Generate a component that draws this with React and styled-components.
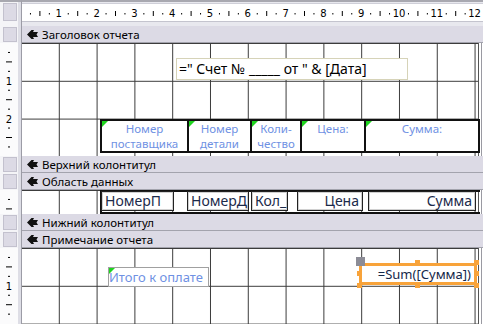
import React from "react";
import styled, { createGlobalStyle } from "styled-components";

const CM = 37.8;

const GlobalStyle = createGlobalStyle`
  html, body {
    margin: 0;
    padding: 0;
    background: #ffffff;
    overflow: hidden;
  }
  body {
    font-family: "Noto Sans", "Open Sans", sans-serif;
  }
`;

const Designer = styled.div`
  display: grid;
  grid-template-columns: 22px 461px;
  grid-template-rows: 26px 17px 113px 17px 17px 24px 17px 17px 76px;
  width: 483px;
  height: 324px;
  overflow: hidden;
`;

const SideCell = styled.div`
  background: #f4f4f7;
  border-right: 1px solid #9c9ca6;
  box-shadow: inset -3px 0 0 #dedee6;
  box-sizing: border-box;
`;

const Corner = styled(SideCell)`
  border-top: 2px solid #a8a8b0;
  padding: 1px 4px 0 3px;
`;

const SideBox = styled.div`
  box-sizing: border-box;
  height: ${(p) => p.$h}px;
  background: #dcdae5;
  border: 1px solid #c3c1ce;
`;

const BarSide = styled(SideCell)`
  padding: 1px 4px 0 3px;
`;

const RulerSide = styled(SideCell)`
  background: #fbfbfc;
  overflow: hidden;
`;

const TopRulerCell = styled.div`
  background: #e8e8ee;
  border-top: 2px solid #a8a8b0;
  padding-top: 1px;
  box-sizing: border-box;
`;

const RulerStrip = styled.div`
  background: #ffffff;
  border-top: 1px solid #cfcfd8;
  border-bottom: 1px solid #c4c4ce;
  height: 17px;
`;

const SectionBar = styled.div`
  display: flex;
  align-items: center;
  gap: 4px;
  padding-left: 5px;
  background: #dcdae5;
  border-bottom: 1px solid #a3a3ad;
  font-size: 11.5px;
  color: #000;
  white-space: nowrap;
`;

const Section = styled.div`
  background: #ffffff;
  overflow: hidden;
`;

const Surface = styled.div`
  position: relative;
  width: 456px;
  height: 100%;
  background-image: linear-gradient(to right, #3b3b3b 1px, transparent 1px),
    linear-gradient(to bottom, #3b3b3b 1px, transparent 1px);
  background-size: ${CM}px ${CM}px;
  background-position: ${CM - 1}px 0;
  border-right: 1px solid #555;
  box-shadow: 2px 0 0 #fff, 3px 0 0 #9a9aa2;
`;

const TitleBox = styled.div`
  position: absolute;
  left: 154px;
  top: 15px;
  width: 232px;
  height: 22px;
  box-sizing: border-box;
  border: 1px solid #d6d3b8;
  background: #fff;
  padding-left: 2px;
  font-size: 14px;
  line-height: 20px;
  color: #000;
  white-space: pre;
`;

const LabelRow = styled.div`
  position: absolute;
  left: 78px;
  top: 76px;
  height: 34px;
  display: flex;
`;

const Label = styled.div`
  position: relative;
  box-sizing: border-box;
  width: ${(p) => p.$w}px;
  height: 100%;
  border: 2px solid #111;
  margin-left: -2px;
  background: #fff;
  color: #6f91e3;
  font-size: 11.5px;
  line-height: 14.5px;
  text-align: center;
  padding-top: 1px;
  &:first-child {
    margin-left: 0;
  }
  &::before {
    content: "";
    position: absolute;
    left: 0;
    top: 0;
    border-top: 6px solid #1ed41e;
    border-right: 6px solid transparent;
  }
`;

const DataFrame = styled.div`
  position: absolute;
  left: 78px;
  top: 0;
  width: 380px;
  height: 24px;
  box-sizing: border-box;
  border: 2px solid #111;
  border-right: none;
`;

const TextBox = styled.div`
  position: absolute;
  left: ${(p) => p.$x}px;
  top: 1px;
  width: ${(p) => p.$w}px;
  height: 20px;
  box-sizing: border-box;
  border: 1px solid #222;
  box-shadow: inset 0 0 0 1px #d0d0d0;
  background: #fff;
  color: #1b2a4a;
  font-size: 14px;
  line-height: 18px;
  padding: 0 3px;
  text-align: ${(p) => (p.$right ? "right" : "left")};
  overflow: hidden;
  white-space: nowrap;
`;

const TotalLabel = styled.div`
  position: absolute;
  left: 86px;
  top: 19px;
  width: 101px;
  height: 20px;
  box-sizing: border-box;
  border: 1px solid #a0a0a0;
  background: #fff;
  color: #6f91e3;
  font-size: 13px;
  line-height: 18px;
  white-space: nowrap;
  &::before {
    content: "";
    position: absolute;
    left: 0;
    top: 0;
    border-top: 6px solid #1ed41e;
    border-right: 6px solid transparent;
  }
`;

const SumWrap = styled.div`
  position: absolute;
  left: 337px;
  top: 15px;
  width: 118px;
  height: 22px;
`;

const SumFrame = styled.div`
  box-sizing: border-box;
  width: 100%;
  height: 100%;
  border: 3px solid #f8a33a;
  background: #fff;
  color: #15284a;
  font-size: 13px;
  line-height: 16px;
  text-align: right;
  padding-right: 3px;
  white-space: nowrap;
`;

const Handle = styled.span`
  position: absolute;
  left: ${(p) => p.$x}px;
  top: ${(p) => p.$y}px;
  width: 5px;
  height: 5px;
  background: #f8a33a;
`;

const MoveHandle = styled.span`
  position: absolute;
  left: -3px;
  top: -6px;
  width: 9px;
  height: 9px;
  background: #8c8c96;
`;

const SectionIcon = () => (
  <svg width="11" height="9" viewBox="0 0 11 9">
    <path d="M0 4.5 L4.5 0 H7 L6 2 H11 L9.5 4.5 L11 7 H6 L7 9 H4.5 Z" fill="#111" />
  </svg>
);

const TopRuler = () => {
  const marks = [];
  for (let q = 1; q <= 49; q++) {
    const x = (CM * q) / 4 - 1;
    if (q % 4 === 0) {
      marks.push(
        <text key={q} x={x} y={13} fontSize="10" textAnchor="middle" fill="#000"
          fontFamily="'DejaVu Sans', sans-serif">
          {q / 4}
        </text>
      );
    } else if (q % 2 === 1) {
      marks.push(<rect key={q} x={x - 0.5} y={9} width={1} height={1.5} fill="#000" />);
    } else {
      marks.push(<rect key={q} x={x - 0.5} y={7} width={1} height={5} fill="#000" />);
    }
  }
  return (
    <svg width="461" height="17">
      {marks}
    </svg>
  );
};

const SideTicks = ({ h }) => {
  const marks = [];
  for (let j = 1; j * (CM / 4) < h; j++) {
    const y = (j * CM) / 4;
    if (j % 4 === 0) {
      if (y + 4 <= h) {
        marks.push(
          <text key={j} x={9} y={y + 4} fontSize="10" textAnchor="middle" fill="#000"
            fontFamily="'DejaVu Sans', sans-serif">
            {j / 4}
          </text>
        );
      }
    } else if (j % 2 === 1) {
      marks.push(<rect key={j} x={8} y={y - 0.5} width={2} height={1} fill="#000" />);
    } else {
      marks.push(<rect key={j} x={6} y={y - 0.5} width={6} height={1} fill="#000" />);
    }
  }
  return (
    <svg width="18" height={h}>
      {marks}
    </svg>
  );
};

const Bar = ({ title }) => (
  <>
    <BarSide>
      <SideBox $h={15} />
    </BarSide>
    <SectionBar>
      <SectionIcon />
      {title}
    </SectionBar>
  </>
);

const labels = [
  { w: 89, lines: ["Номер", "поставщика"] },
  { w: 65, lines: ["Номер", "детали"] },
  { w: 52, lines: ["Коли-", "чество"] },
  { w: 66, lines: ["Цена:"] },
  { w: 116, lines: ["Сумма:"] },
];

const fields = [
  { x: 1, w: 73, text: "НомерП" },
  { x: 87, w: 62, text: "НомерД" },
  { x: 151, w: 37, text: "Кол_" },
  { x: 197, w: 66, text: "Цена", right: true },
  { x: 268, w: 108, text: "Сумма", right: true },
];

export default function App() {
  return (
    <>
      <GlobalStyle />
      <Designer>
        <Corner>
          <SideBox $h={18} />
        </Corner>
        <TopRulerCell>
          <RulerStrip>
            <TopRuler />
          </RulerStrip>
        </TopRulerCell>

        <Bar title="Заголовок отчета" />
        <RulerSide>
          <SideTicks h={113} />
        </RulerSide>
        <Section>
          <Surface>
            <TitleBox>{'=" Счет № _____ от " & [Дата]'}</TitleBox>
            <LabelRow>
              {labels.map((l) => (
                <Label key={l.lines[0] + l.w} $w={l.w}>
                  {l.lines.map((line, i) => (
                    <React.Fragment key={line}>
                      {i > 0 && <br />}
                      {line}
                    </React.Fragment>
                  ))}
                </Label>
              ))}
            </LabelRow>
          </Surface>
        </Section>

        <Bar title="Верхний колонтитул" />
        <Bar title="Область данных" />
        <RulerSide>
          <SideTicks h={24} />
        </RulerSide>
        <Section>
          <Surface>
            <DataFrame />
            {fields.map((f) => (
              <TextBox key={f.text} $x={f.x + 78} $w={f.w} $right={f.right}>
                {f.text}
              </TextBox>
            ))}
          </Surface>
        </Section>

        <Bar title="Нижний колонтитул" />
        <Bar title="Примечание отчета" />
        <RulerSide>
          <SideTicks h={76} />
        </RulerSide>
        <Section>
          <Surface>
            <TotalLabel>Итого к оплате</TotalLabel>
            <SumWrap>
              <SumFrame>=Sum([Сумма])</SumFrame>
              <MoveHandle />
              <Handle $x={56} $y={-3} />
              <Handle $x={56} $y={20} />
              <Handle $x={-2} $y={8} />
              <Handle $x={115} $y={8} />
              <Handle $x={-2} $y={20} />
              <Handle $x={115} $y={-3} />
              <Handle $x={115} $y={20} />
            </SumWrap>
          </Surface>
        </Section>
      </Designer>
    </>
  );
}
